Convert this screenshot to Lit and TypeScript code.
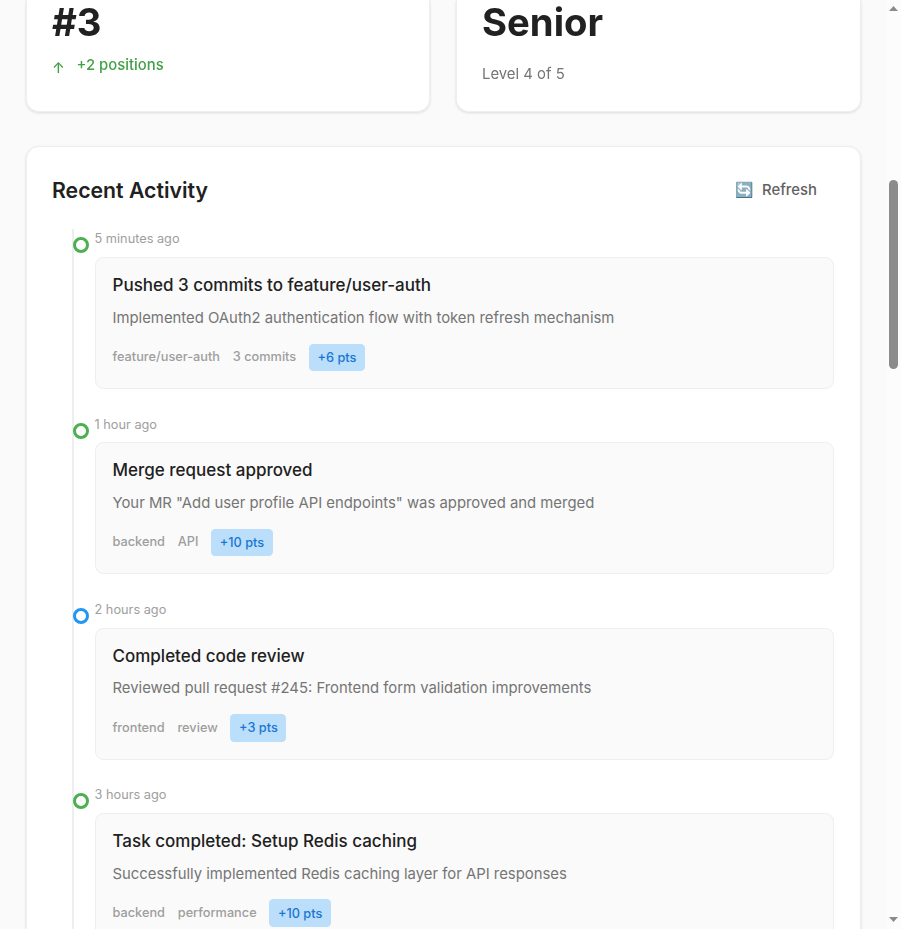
import { LitElement, html, css } from "lit";
import { customElement } from "lit/decorators.js";

interface Activity {
  time: string;
  title: string;
  text: string;
  tags: string[];
  points: number;
  kind: "success" | "info";
}

const activities: Activity[] = [
  {
    time: "5 minutes ago",
    title: "Pushed 3 commits to feature/user-auth",
    text: "Implemented OAuth2 authentication flow with token refresh mechanism",
    tags: ["feature/user-auth", "3 commits"],
    points: 6,
    kind: "success",
  },
  {
    time: "1 hour ago",
    title: "Merge request approved",
    text: 'Your MR "Add user profile API endpoints" was approved and merged',
    tags: ["backend", "API"],
    points: 10,
    kind: "success",
  },
  {
    time: "2 hours ago",
    title: "Completed code review",
    text: "Reviewed pull request #245: Frontend form validation improvements",
    tags: ["frontend", "review"],
    points: 3,
    kind: "info",
  },
  {
    time: "3 hours ago",
    title: "Task completed: Setup Redis caching",
    text: "Successfully implemented Redis caching layer for API responses",
    tags: ["backend", "performance"],
    points: 10,
    kind: "success",
  },
];

@customElement("app-root")
export class AppRoot extends LitElement {
  static styles = css`
    :host {
      display: flex;
      height: 929px;
      overflow: hidden;
      background: #fafafa;
      color: #212121;
      font-family: Inter, sans-serif;
      font-size: 17px;
      line-height: 1.5;
    }
    *,
    *::before {
      box-sizing: border-box;
    }
    .page {
      flex: 1;
      min-width: 0;
      padding: 0 25.5px;
    }
    .stats {
      display: grid;
      grid-template-columns: 404px 404.75px;
      justify-content: space-between;
      margin-bottom: 34px;
    }
    .panel {
      background: #fff;
      border: 1px solid #eeeeee;
      border-radius: 12.75px;
      box-shadow: 0 1px 3px rgba(0, 0, 0, 0.12);
      padding: 25.5px;
    }
    .stat {
      height: 112px;
      border-top: 0;
      border-radius: 0 0 12.75px 12.75px;
      padding-top: 0;
      padding-left: 25px;
      will-change: transform;
    }
    .value {
      font-size: 38.25px;
      font-weight: 700;
      line-height: 44px;
    }
    .trend {
      display: flex;
      gap: 8.5px;
      margin-top: 10px;
      font-size: 14.875px;
      font-weight: 500;
      line-height: 22px;
      color: #43a047;
    }
    .arrow {
      width: 16px;
      padding-top: 3px;
    }
    .level {
      margin-top: 19px;
      font-size: 14.875px;
      line-height: 22px;
      color: #757575;
    }
    .head {
      display: flex;
      justify-content: space-between;
      align-items: center;
      height: 35px;
      margin-bottom: 21.5px;
    }
    .heading {
      padding-top: 1px;
      font-size: 21.25px;
      font-weight: 600;
    }
    .refresh {
      display: flex;
      align-items: center;
      gap: 8.5px;
      padding: 0 17px;
      font-size: 14.875px;
      font-weight: 500;
      color: #616161;
    }
    .timeline {
      position: relative;
      height: 760px;
      padding-left: 42.5px;
    }
    .timeline::before {
      content: "";
      position: absolute;
      left: 20.25px;
      top: 0;
      bottom: 0;
      width: 2px;
      background: #eeeeee;
    }
    .item {
      position: relative;
      height: 185.25px;
    }
    .item::before {
      content: "";
      position: absolute;
      left: -21.25px;
      top: 8.3px;
      width: 16px;
      height: 16px;
      border: 3px solid #4caf50;
      border-radius: 50%;
      background: #fff;
    }
    .info::before {
      border-color: #2196f3;
    }
    .time {
      height: 28.1px;
      padding-top: 0.3px;
      font-size: 12.75px;
      line-height: 19.6px;
      color: #9e9e9e;
    }
    .card {
      height: 131.95px;
      padding: 16px 17px;
      border: 1px solid #eeeeee;
      border-radius: 8.5px;
      background: #fafafa;
    }
    .title {
      font-weight: 500;
      line-height: 22px;
    }
    .text {
      margin-top: 10.68px;
      font-size: 14.875px;
      line-height: 22px;
      color: #757575;
    }
    .meta {
      display: flex;
      gap: 12.75px;
      margin-top: 14.82px;
      font-size: 12.75px;
      font-weight: 500;
      line-height: 26px;
      color: #9e9e9e;
    }
    .tag {
      padding-top: 0.5px;
    }
    .points {
      height: 27.6px;
      padding: 0.25px 8.5px 0;
      border-radius: 4.25px;
      background: #bbdefb;
      color: #1976d2;
      line-height: 27.3px;
    }
    .scrollbar {
      display: flex;
      flex-direction: column;
      align-items: center;
      justify-content: space-between;
      width: 15px;
      padding: 6px 0 7px;
      background: #fcfcfc;
      fill: #8b8b8b;
    }
    .scrollbar svg {
      display: block;
      width: 9px;
      height: 5px;
    }
    .thumb {
      width: 9px;
      height: 189px;
      margin-top: 169px;
      margin-bottom: auto;
      border-radius: 4.5px;
      background: #8b8b8b;
    }
  `;

  render() {
    return html`
      <main class="page">
        <section class="stats">
          <div class="panel stat">
            <div class="value">#3</div>
            <div class="trend"><span class="arrow">↑</span><span>+2 positions</span></div>
          </div>
          <div class="panel stat">
            <div class="value">Senior</div>
            <div class="level">Level 4 of 5</div>
          </div>
        </section>
        <section class="panel">
          <div class="head">
            <div class="heading">Recent Activity</div>
            <div class="refresh"><span>🔄</span><span>Refresh</span></div>
          </div>
          <div class="timeline">
            ${activities.map(
              (a) => html`
                <div class="item ${a.kind}">
                  <div class="time">${a.time}</div>
                  <div class="card">
                    <div class="title">${a.title}</div>
                    <div class="text">${a.text}</div>
                    <div class="meta">
                      ${a.tags.map((t) => html`<span class="tag">${t}</span>`)}
                      <span class="points">+${a.points} pts</span>
                    </div>
                  </div>
                </div>
              `,
            )}
          </div>
        </section>
      </main>
      <div class="scrollbar">
        <svg viewBox="0 0 9 5"><path d="M4.5 0L9 5H0z" /></svg>
        <div class="thumb"></div>
        <svg viewBox="0 0 9 5"><path d="M0 0H9L4.5 5z" /></svg>
      </div>
    `;
  }
}
